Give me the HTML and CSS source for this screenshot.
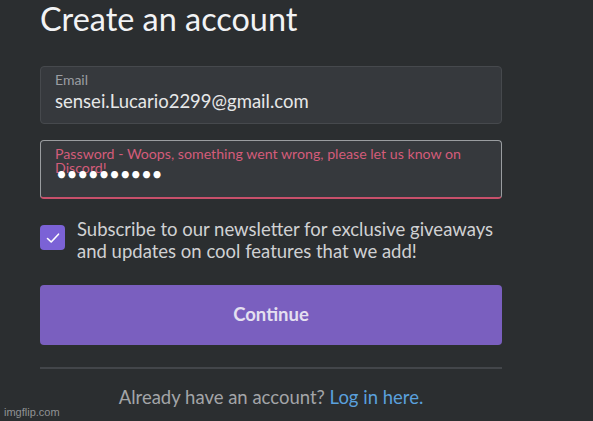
FILE: index.html
```html
<!DOCTYPE html>
<html>
<head>
<meta charset="utf-8">
<link rel="stylesheet" href="styles.css">
</head>
<body>
<div class="form">
  <h1 class="title">Create an account</h1>
  <div class="field">
    <div class="label">Email</div>
    <div class="value">sensei.Lucario2299@gmail.com</div>
  </div>
  <div class="field field-error">
    <div class="label label-error">Password - Woops, something went wrong, please let us know on Discord!</div>
    <div class="value dots">••••••••••</div>
  </div>
  <div class="check-row">
    <div class="checkbox">
      <svg width="16" height="16" viewBox="0 0 16 16"><path d="M2.5 8.5 L6.2 12 L13.5 4.2" fill="none" stroke="#fff" stroke-width="1.6" stroke-linecap="round" stroke-linejoin="round"/></svg>
    </div>
    <div class="check-text">Subscribe to our newsletter for exclusive giveaways and updates on cool features that we add!</div>
  </div>
  <button class="continue">Continue</button>
  <div class="divider"></div>
  <div class="footer">Already have an account? <a class="link">Log in here.</a></div>
</div>
<div class="watermark">imgflip.com</div>
</body>
</html>
```
FILE: styles.css
```css
html, body {
  margin: 0;
  padding: 0;
}
body {
  background: #2b2e30;
  font-family: Lato, "Open Sans", sans-serif;
  width: 593px;
  height: 421px;
  overflow: hidden;
  position: relative;
}
.form {
  width: 462px;
  margin-left: 40px;
  display: flex;
  flex-direction: column;
}
.title {
  margin: 0;
  font-size: 32.4px;
  line-height: 38px;
  font-weight: 400;
  color: #f2f3f5;
}
.field {
  margin-top: 28px;
  height: 58px;
  box-sizing: border-box;
  border: 1px solid #46494d;
  border-radius: 4px;
  background: #36393d;
  padding: 5px 14px 0;
}
.field-error {
  margin-top: 16px;
  height: 59px;
  border-color: #9a9da0;
  border-bottom: 2px solid #c8506b;
  padding-top: 6px;
}
.label {
  font-size: 14px;
  line-height: 16px;
  color: #9b9ea3;
  margin-bottom: 2px;
}
.label-error {
  color: #d35c7a;
  font-size: 14.2px;
  line-height: 14px;
  height: 14px;
  margin-bottom: 2px;
}
.value {
  font-size: 18.5px;
  line-height: 22px;
  color: #e6e7e8;
}
.dots {
  font-size: 19px;
  letter-spacing: -0.4px;
  color: #ffffff;
  padding-left: 1px;
  margin-top: 2px;
}
.check-row {
  margin-top: 19px;
  display: flex;
  align-items: flex-start;
  gap: 12px;
}
.checkbox {
  flex: none;
  width: 25px;
  height: 25px;
  margin-top: 7px;
  border-radius: 4px;
  background: #7b62d6;
  display: flex;
  align-items: center;
  justify-content: center;
}
.check-text {
  font-size: 18.5px;
  line-height: 22px;
  color: #d0d1d3;
}
.continue {
  margin-top: 23px;
  height: 60px;
  border: none;
  border-radius: 4px;
  background: #7a5fbf;
  color: #e4e0f0;
  font-family: Lato, "Open Sans", sans-serif;
  font-size: 18.5px;
  font-weight: 700;
  padding: 0 0 3px;
}
.divider {
  margin-top: 22px;
  height: 2px;
  background: #43464a;
}
.footer {
  margin-top: 17px;
  text-align: center;
  font-size: 18.5px;
  line-height: 22px;
  color: #a3a5a8;
}
.link {
  color: #5aa0dd;
}
.watermark {
  position: absolute;
  left: 4px;
  bottom: 3px;
  font-family: "Liberation Sans", Arial, sans-serif;
  font-size: 11px;
  color: #909294;
}
```
